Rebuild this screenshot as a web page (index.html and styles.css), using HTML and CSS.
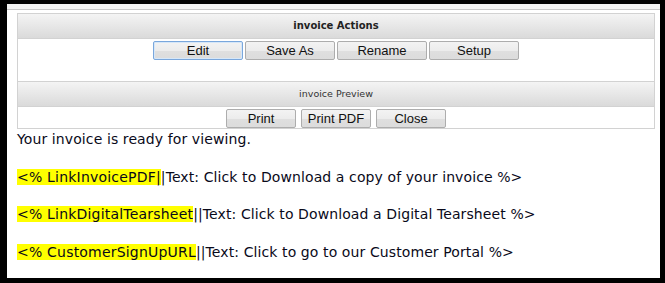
FILE: index.html
```html
<!DOCTYPE html>
<html>
<head>
<meta charset="utf-8">
<link rel="stylesheet" href="styles.css">
</head>
<body>
<div class="frame">
  <div class="page">
    <div class="topstrip"></div>
    <div class="panel">
      <div class="panel-head bold">invoice Actions</div>
      <div class="btn-row first">
        <button class="btn wide focused">Edit</button>
        <button class="btn wide">Save As</button>
        <button class="btn wide">Rename</button>
        <button class="btn wide">Setup</button>
      </div>
      <div class="panel-head">invoice Preview</div>
      <div class="btn-row second">
        <button class="btn narrow">Print</button>
        <button class="btn narrow">Print PDF</button>
        <button class="btn narrow">Close</button>
      </div>
    </div>
    <div class="content">
      <p>Your invoice is ready for viewing.</p>
      <p><span class="hl">&lt;% LinkInvoicePDF|</span>|Text: Click to Download a copy of your invoice %&gt;</p>
      <p><span class="hl">&lt;% LinkDigitalTearsheet</span>||Text: Click to Download a Digital Tearsheet %&gt;</p>
      <p><span class="hl">&lt;% CustomerSignUpURL</span>||Text: Click to go to our Customer Portal %&gt;</p>
    </div>
  </div>
</div>
</body>
</html>
```
FILE: styles.css
```css
html, body {
  margin: 0;
  padding: 0;
  background: #000;
}
.frame {
  width: 665px;
  height: 283px;
  box-sizing: border-box;
  padding: 4px 5px 5px 7px;
  background: #000;
}
.page {
  background: #fff;
  height: 274px;
  overflow: hidden;
}
.topstrip {
  height: 5px;
  background: #f2f2f2;
  border-bottom: 1px solid #c6c6c6;
}
.panel {
  margin: 3px 5px 0 10px;
  border: 1px solid #d2d2d2;
  font-family: "DejaVu Sans", Verdana, sans-serif;
}
.panel-head {
  height: 24px;
  line-height: 24px;
  text-align: center;
  font-size: 9.5px;
  color: #333;
  background: linear-gradient(#f4f4f4, #dadada);
  border-bottom: 1px solid #d2d2d2;
}
.panel-head.bold {
  font-weight: bold;
  font-size: 10px;
  color: #222;
}
.btn-row {
  display: flex;
  justify-content: center;
  align-items: flex-start;
  padding-top: 2px;
}
.btn-row.first {
  height: 40px;
  gap: 2px;
  border-bottom: 1px solid #d2d2d2;
}
.btn-row.second {
  height: 19px;
  gap: 5px;
}
.btn {
  height: 19px;
  margin: 0;
  padding: 0;
  box-sizing: border-box;
  border: 1px solid #adadad;
  border-radius: 2px;
  background: linear-gradient(#f3f3f3 0%, #ececec 50%, #dfdfdf 51%, #dcdcdc 100%);
  font-family: "Liberation Sans", Arial, sans-serif;
  font-size: 13px;
  color: #111;
  line-height: 17px;
}
.btn.wide { width: 90px; }
.btn.narrow { width: 70px; }
.btn.focused {
  border-color: #7aa7dc;
  box-shadow: inset 0 0 0 1px #d6e7f8;
}
.content {
  margin: 0 0 0 10px;
  font-family: "DejaVu Sans", Verdana, sans-serif;
  font-size: 14px;
  line-height: 20px;
  color: #0a0a1a;
}
.content p {
  margin: 0 0 17.5px 0;
  white-space: nowrap;
  letter-spacing: 0.1px;
}
.hl {
  background: #ffff00;
  letter-spacing: 0.2px;
}
```
